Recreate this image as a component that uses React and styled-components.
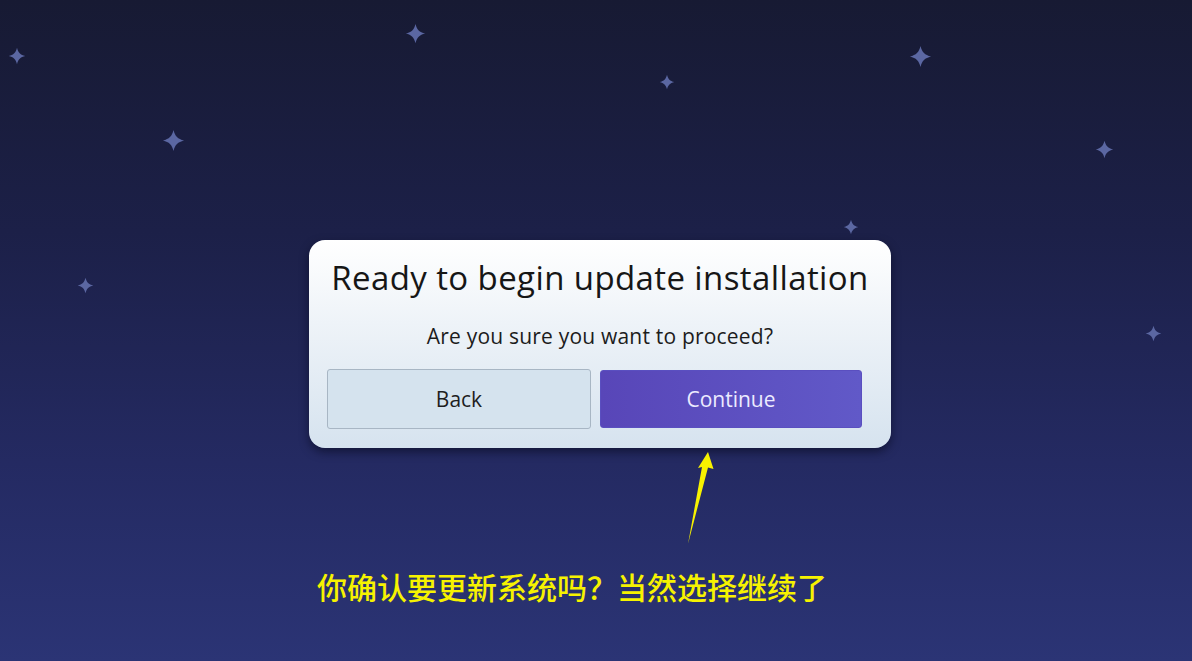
import styled, { createGlobalStyle } from 'styled-components';

const GlobalStyle = createGlobalStyle`
  html, body {
    margin: 0;
    padding: 0;
  }
  body {
    font-family: 'Open Sans', 'Noto Sans', sans-serif;
  }
`;

const stars = [
  { x: 17, y: 56, size: 18 },
  { x: 415, y: 33, size: 21 },
  { x: 173, y: 140, size: 23 },
  { x: 667, y: 82, size: 16 },
  { x: 920, y: 56, size: 23 },
  { x: 1104, y: 149, size: 19 },
  { x: 851, y: 227, size: 16 },
  { x: 85, y: 285, size: 17 },
  { x: 1153, y: 333, size: 17 },
];

const Page = styled.div`
  position: relative;
  overflow: hidden;
  min-height: 100vh;
  box-sizing: border-box;
  padding-top: 240px;
  display: flex;
  flex-direction: column;
  background: linear-gradient(180deg, #171a33 0%, #1c2048 35%, #242a62 70%, #2b3475 100%);
`;

const StarMark = styled.svg`
  position: absolute;
  fill: #5b67a2;
  filter: blur(0.5px);
`;

const Dialog = styled.div`
  align-self: flex-start;
  margin-left: 309px;
  width: 582px;
  box-sizing: border-box;
  padding: 18px 29px 19px 18px;
  border-radius: 16px;
  background: linear-gradient(180deg, #ffffff 0%, #eef3f8 40%, #d6e3ef 100%);
  box-shadow: 0 4px 10px rgba(5, 8, 25, 0.55);
  display: flex;
  flex-direction: column;
`;

const Title = styled.h1`
  margin: 0 -29px 0 -18px;
  text-align: center;
  white-space: nowrap;
  font-size: 33px;
  font-weight: 400;
  letter-spacing: 0.4px;
  line-height: 40px;
  color: #161616;
`;

const Question = styled.p`
  margin: 24px -29px 0 -18px;
  text-align: center;
  white-space: nowrap;
  font-size: 21px;
  letter-spacing: 0.2px;
  line-height: 28px;
  color: #1c1c1c;
`;

const Actions = styled.div`
  margin-top: 19px;
  display: grid;
  grid-template-columns: 264px 1fr;
  gap: 9px;
`;

const ActionButton = styled.button`
  border-radius: 3px;
  font-family: 'Open Sans', 'Noto Sans', sans-serif;
  font-size: 21px;
  cursor: pointer;
  border: 1px solid ${(p) => (p.$primary ? '#5a4fc0' : '#a8b6c4')};
  background: ${(p) => (p.$primary ? 'linear-gradient(90deg, #5846b8, #6159c8)' : '#d5e3ee')};
  color: ${(p) => (p.$primary ? '#ecebff' : '#1e1e1e')};
  margin-top: ${(p) => (p.$primary ? '1px' : '0')};
  height: ${(p) => (p.$primary ? '58px' : '60px')};
`;

const Annotation = styled.div`
  display: flex;
  flex-direction: column;
`;

const Arrow = styled.svg`
  margin: 2px 0 0 680px;
  fill: #f7f200;
`;

const Caption = styled.p`
  margin: 20px 0 0 317px;
  font-family: 'Noto Sans CJK SC', 'Noto Sans', sans-serif;
  font-size: 30px;
  font-weight: 500;
  line-height: 40px;
  color: #f6f200;
  white-space: nowrap;
`;

const Star = ({ x, y, size }) => (
  <StarMark
    width={size}
    height={size}
    viewBox="0 0 24 24"
    style={{ left: x - size / 2, top: y - size / 2 }}
  >
    <path d="M12 1 C13.6 7.5 16.5 10.4 23 12 C16.5 13.6 13.6 16.5 12 23 C10.4 16.5 7.5 13.6 1 12 C7.5 10.4 10.4 7.5 12 1Z" />
  </StarMark>
);

export default function App() {
  return (
    <Page>
      <GlobalStyle />
      {stars.map((s, i) => (
        <Star key={i} {...s} />
      ))}
      <Dialog>
        <Title>Ready to begin update installation</Title>
        <Question>Are you sure you want to proceed?</Question>
        <Actions>
          <ActionButton>Back</ActionButton>
          <ActionButton $primary>Continue</ActionButton>
        </Actions>
      </Dialog>
      <Annotation>
        <Arrow width="36" height="96" viewBox="0 0 36 96">
          <polygon points="28,2 33.5,19 28,17.5 8,94 22,17 18,18" />
        </Arrow>
        <Caption>你确认要更新系统吗？当然选择继续了</Caption>
      </Annotation>
    </Page>
  );
}
